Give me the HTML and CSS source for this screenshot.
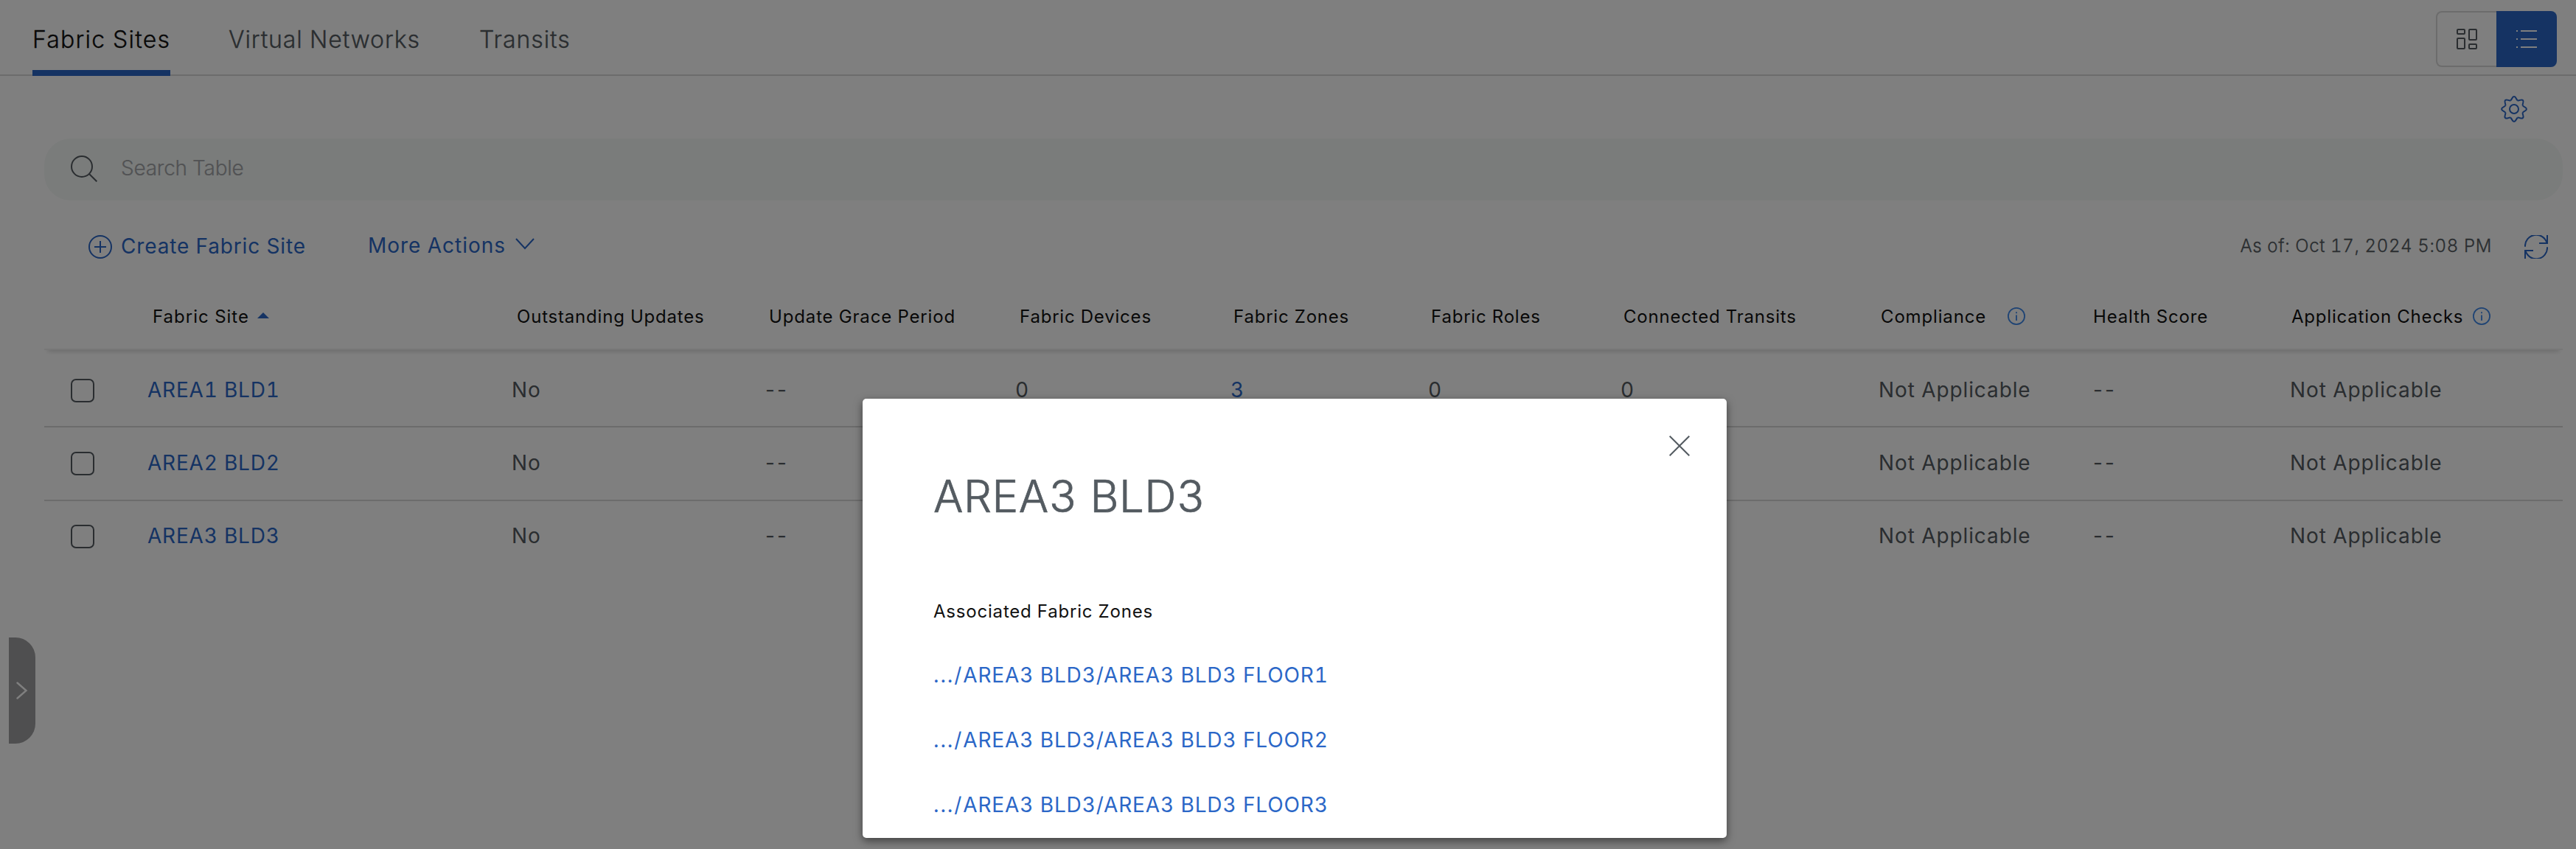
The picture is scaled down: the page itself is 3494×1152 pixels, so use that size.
FILE: index.html
```html
<!DOCTYPE html>
<html lang="en">
<head>
<meta charset="utf-8">
<title>Fabric Sites</title>
<link rel="stylesheet" href="styles.css">
</head>
<body>
<svg class="defs" width="0" height="0" aria-hidden="true">
  <symbol id="info" viewBox="0 0 24 24"><circle cx="12" cy="12" r="11.1"/><path d="M12 10.5V18M12 6.2v2"/></symbol>
</svg>

<main class="page">
  <nav class="tabs">
    <a class="tab tab-sites active">Fabric Sites</a>
    <a class="tab tab-networks">Virtual Networks</a>
    <a class="tab tab-transits">Transits</a>
    <div class="view-toggle">
      <button class="view view-cards" aria-label="Cards">
        <svg width="28" height="28" viewBox="0 0 28 28"><rect x="1" y="1" width="10" height="6" rx="1"/><rect x="17" y="1" width="10" height="14" rx="1"/><rect x="1" y="13" width="10" height="14" rx="1"/><rect x="17" y="21" width="10" height="6" rx="1"/></svg>
      </button>
      <button class="view view-list" aria-label="List">
        <svg width="28" height="28" viewBox="0 0 28 28"><path d="M0 3h2M6 3h22M0 14h2M6 14h22M0 25h2M6 25h22"/></svg>
      </button>
    </div>
  </nav>

  <div class="settings">
    <svg width="36" height="36" viewBox="-18 -18 36 36">
      <g id="teeth">
        <path d="M-4.86-11.73C-2.6-12.7-3-16.9 0-16.9S2.6-12.7 4.86-11.73"/>
        <path transform="rotate(45)" d="M-4.86-11.73C-2.6-12.7-3-16.9 0-16.9S2.6-12.7 4.86-11.73"/>
        <path transform="rotate(90)" d="M-4.86-11.73C-2.6-12.7-3-16.9 0-16.9S2.6-12.7 4.86-11.73"/>
        <path transform="rotate(135)" d="M-4.86-11.73C-2.6-12.7-3-16.9 0-16.9S2.6-12.7 4.86-11.73"/>
      </g>
      <use href="#teeth" transform="rotate(180)"/>
      <circle r="6"/>
    </svg>
  </div>

  <div class="search">
    <svg width="36" height="36" viewBox="0 0 36 36"><circle cx="15" cy="15" r="14"/><path d="M25 25l10.3 10.3"/></svg>
    <span>Search Table</span>
  </div>

  <div class="actions">
    <a class="create">
      <svg width="32" height="32" viewBox="0 0 32 32"><circle cx="16" cy="16" r="15"/><path d="M16 8v16M8 16h16"/></svg>
      <span>Create Fabric Site</span>
    </a>
    <a class="more">
      <span>More Actions</span>
      <svg width="26" height="16" viewBox="0 0 26 16"><path d="M1 1l12 13L25 1"/></svg>
    </a>
    <span class="as-of">As of: Oct 17, 2024 5:08 PM</span>
    <svg class="refresh" width="32" height="32" viewBox="0 0 32 32"><path d="M1 15.7A15 15 0 0 1 30.5 11M31 0v11H20M31 16.3A15 15 0 0 1 1.5 21M1 32V21h11"/></svg>
  </div>

  <section class="table">
    <div class="row head">
      <span></span>
      <span>Fabric Site<i class="sort"></i></span>
      <span>Outstanding Updates</span>
      <span>Update Grace Period</span>
      <span>Fabric Devices</span>
      <span>Fabric Zones</span>
      <span>Fabric Roles</span>
      <span>Connected Transits</span>
      <span>Compliance<svg class="info info-far"><use href="#info"/></svg></span>
      <span>Health Score</span>
      <span>Application Checks<svg class="info"><use href="#info"/></svg></span>
    </div>
    <div class="row first">
      <i class="check"></i><a>AREA1 BLD1</a><span>No</span><span class="dash">--</span><span>0</span><a>3</a><span>0</span><span>0</span><span>Not Applicable</span><span class="dash">--</span><span>Not Applicable</span>
    </div>
    <div class="row">
      <i class="check"></i><a>AREA2 BLD2</a><span>No</span><span class="dash">--</span><span></span><a></a><span></span><span></span><span>Not Applicable</span><span class="dash">--</span><span>Not Applicable</span>
    </div>
    <div class="row last">
      <i class="check"></i><a>AREA3 BLD3</a><span>No</span><span class="dash">--</span><span></span><a></a><span></span><span></span><span>Not Applicable</span><span class="dash">--</span><span>Not Applicable</span>
    </div>
  </section>

  <div class="drawer-handle">
    <svg width="16" height="24" viewBox="0 0 16 24"><path d="M1.5 1.5L13.5 12l-12 10.5"/></svg>
  </div>
</main>

<div class="overlay">
  <div class="modal" role="dialog">
    <svg class="close" width="28" height="28" viewBox="0 0 28 28"><path d="M.7.7l26.6 26.6M27.3.7L.7 27.3"/></svg>
    <h1>AREA3 BLD3</h1>
    <h2>Associated Fabric Zones</h2>
    <a><span class="dots">.../</span>AREA3 BLD3/AREA3 BLD3 FLOOR1</a>
    <a><span class="dots">.../</span>AREA3 BLD3/AREA3 BLD3 FLOOR2</a>
    <a><span class="dots">.../</span>AREA3 BLD3/AREA3 BLD3 FLOOR3</a>
  </div>
</div>
</body>
</html>
```
FILE: styles.css
```css
* { box-sizing: border-box; }

body {
  margin: 0;
  background: #fff;
  color: #545b61;
  font-family: Inter, "Liberation Sans", sans-serif;
  font-size: 28px;
  font-weight: 400;
  font-variant-numeric: tabular-nums;
  white-space: nowrap;
}

svg { display: block; flex: none; fill: none; stroke: currentColor; stroke-width: 2; }
.defs { position: absolute; }

.page { position: relative; height: 1152px; overflow: hidden; }

.tabs {
  display: flex;
  align-items: center;
  gap: 79px;
  height: 103px;
  padding: 0 26px 0 44px;
  box-shadow: inset 0 -2px #d9d9d9;
  font-size: 32px;
  font-weight: 300;
  -webkit-text-stroke: .3px;
}
.tab { height: 103px; line-height: 107px; }
.tab-sites { width: 187px; letter-spacing: 1.2px; }
.tab-networks { width: 261px; letter-spacing: .88px; }
.tab-transits { letter-spacing: .95px; }
.tab.active { color: #111; box-shadow: inset 0 -8px #2b67c7; }

.view-toggle { display: flex; margin-left: auto; margin-top: 3px; }
.view {
  display: grid;
  place-items: center;
  width: 82px;
  height: 76px;
  padding: 0;
  border: 0;
}
.view-cards {
  background: #fff;
  color: #545b61;
  border: 2px solid #d9d9d9;
  border-right: 0;
  border-radius: 8px 0 0 8px;
}
.view-list { background: #2b67c7; color: #fff; border-radius: 0 8px 8px 0; }

.settings {
  display: flex;
  justify-content: flex-end;
  align-items: center;
  height: 85px;
  padding: 5px 66px 0 0;
  color: #2b67c7;
}

.search {
  display: flex;
  align-items: center;
  gap: 32px;
  height: 84px;
  margin: 0 18px 0 60px;
  padding-left: 36px;
  border-radius: 36px;
  background: #f4f8f6;
  font-weight: 300;
  letter-spacing: -.25px;
  -webkit-text-stroke: .2px;
}
.search svg { margin-bottom: 2px; }
.search span { color: #a3a5a8; padding-bottom: 4px; }

.actions {
  display: flex;
  align-items: center;
  height: 113px;
  padding: 13px 38px 0 120px;
  color: #2b67c7;
}
.actions span { padding-bottom: 4px; }
.create, .more { display: flex; align-items: center; }
.create { width: 379px; gap: 12px; letter-spacing: .85px; }
.actions .create span { padding-bottom: 2px; }
.more { gap: 13px; letter-spacing: .96px; }
.more svg { margin-bottom: 8px; }
.actions .as-of {
  margin-left: auto;
  margin-right: 44px;
  padding-bottom: 3px;
  color: #545b61;
  font-size: 24px;
  font-weight: 300;
  letter-spacing: .64px;
  -webkit-text-stroke: .3px;
}

.table { margin: 0 18px 0 60px; }
.row {
  display: grid;
  grid-template-columns: 140px 494px 344px 339px 292px 268px 261px 350px 291px 267px 1fr;
  align-items: center;
  height: 100px;
  border-bottom: 2px solid #d9d9d9;
  letter-spacing: .9px;
}
.row > span { padding-bottom: 3px; }
.row > a { padding-bottom: 2px; }
.row.first { height: 105px; padding-top: 7px; }
.row.last { height: 96px; border-bottom: 0; }
.row a, .modal a { color: #2b67c7; letter-spacing: .8px; }
.row .dash { font-variant-numeric: normal; letter-spacing: 3px; }

.row.head {
  height: 90px;
  border-bottom-color: #eeeeee;
  box-shadow: 0 7px 6px -5px rgba(0, 0, 0, .16);
  color: #111;
  font-size: 24px;
  letter-spacing: .8px;
}
.head > span { display: flex; align-items: center; padding-bottom: 0; }
.head > :nth-child(2) { padding-left: 7px; letter-spacing: 1px; }
.head > :nth-child(3) { padding-left: 7px; }
.head > :nth-child(4) { padding-left: 5px; letter-spacing: .85px; }
.head > :nth-child(5) { padding-left: 6px; }
.head > :nth-child(6) { padding-left: 4px; }
.head > :nth-child(7) { padding-left: 4px; }
.head > :nth-child(8) { padding-left: 4px; }
.head > :nth-child(9) { padding-left: 3px; letter-spacing: .85px; }
.head > :nth-child(11) { padding-left: 2px; }

.sort {
  margin-left: 11px;
  margin-bottom: 3px;
  border: 8px solid transparent;
  border-top: 0;
  border-bottom: 8px solid #2b67c7;
}
.info { width: 24px; height: 24px; margin-left: 13px; color: #3f88e8; stroke-width: 1.8; }
.info-far { margin-left: 29px; }

.check {
  width: 32px;
  height: 32px;
  margin-left: 36px;
  border: 2px solid #545b61;
  border-radius: 7px;
}

.drawer-handle {
  position: absolute;
  left: 12px;
  top: 865px;
  display: grid;
  place-items: center;
  width: 36px;
  height: 144px;
  border-radius: 0 27px 27px 0;
  background: #9e9ea0;
  color: #fff;
}
.drawer-handle svg { stroke-width: 2.4; stroke-linecap: round; }

.overlay {
  position: absolute;
  inset: 0;
  padding: 541px 0 0 18px;
  background: rgba(0, 0, 0, .5);
  overflow: hidden;
}
.modal {
  position: relative;
  width: 1172px;
  height: 596px;
  margin: 0 auto;
  padding: 96px 96px 0;
  border-radius: 5px;
  background: #fff;
  box-shadow: 0 4px 12px rgba(0, 0, 0, .5);
}
.close { position: absolute; top: 50px; right: 50px; }
.modal h1 {
  margin: 0;
  font-size: 60px;
  font-weight: 300;
  line-height: 72px;
  letter-spacing: .5px;
  -webkit-text-stroke: .7px;
}
.modal h2 {
  margin: 105px 0 26px;
  color: #111;
  font-size: 24px;
  font-weight: 400;
  line-height: 32px;
  letter-spacing: .8px;
}
.modal a { display: block; line-height: 88px; letter-spacing: .88px; }
.dots { letter-spacing: 1.9px; }
```
